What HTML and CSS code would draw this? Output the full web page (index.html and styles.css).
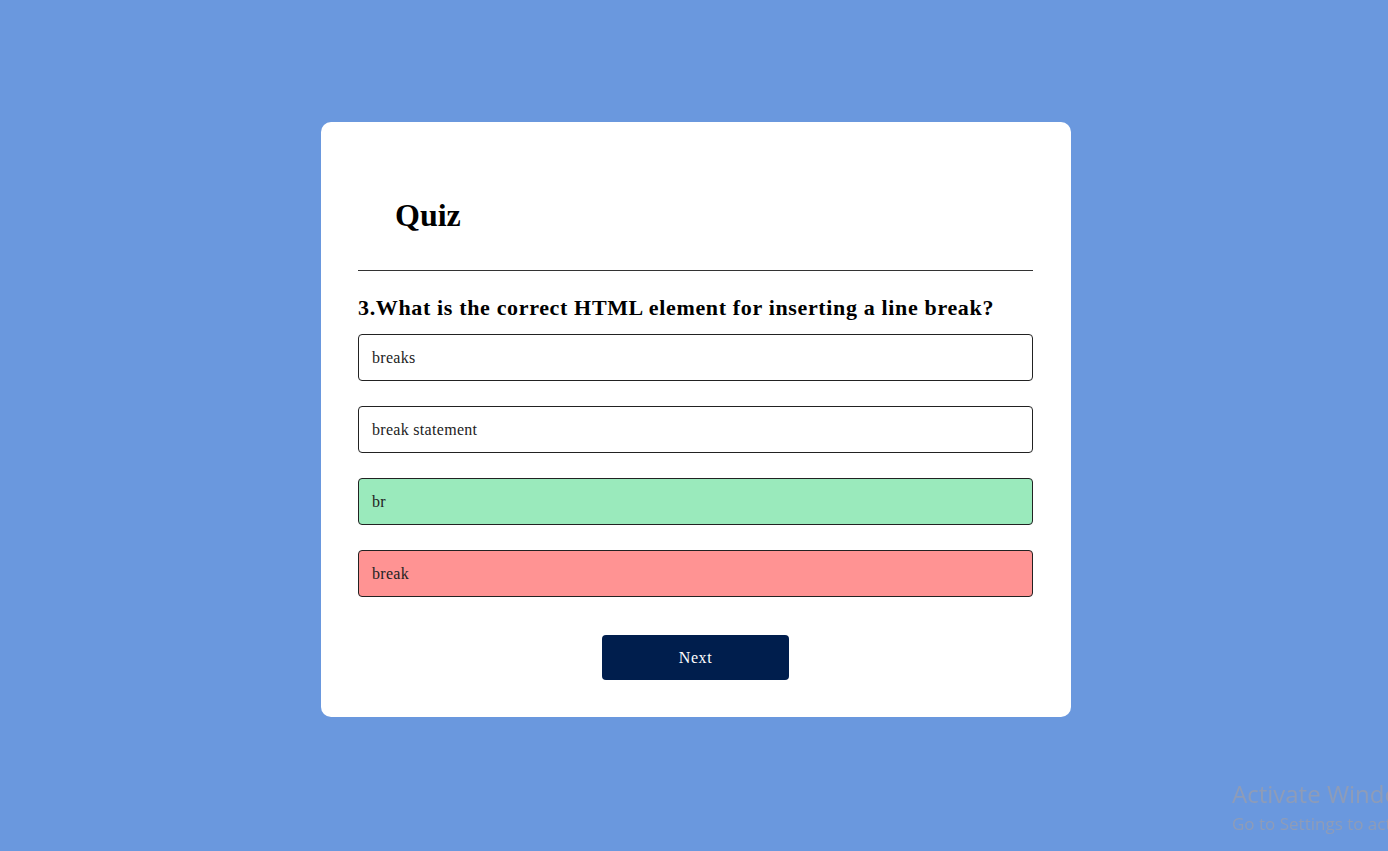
FILE: index.html
```html
<!DOCTYPE html>
<html>
<head>
<meta charset="utf-8">
<title>Quiz</title>
<link rel="stylesheet" href="styles.css">
</head>
<body>
<div class="app">
  <h1 class="title">Quiz</h1>
  <div class="quiz">
    <h2 class="question">3.What is the correct HTML element for inserting a line break?</h2>
    <div class="answers">
      <button class="btn">breaks</button>
      <button class="btn">break statement</button>
      <button class="btn correct">br</button>
      <button class="btn incorrect">break</button>
    </div>
    <button class="next">Next</button>
  </div>
</div>
<div class="watermark">
  <div class="wm-title">Activate Windows</div>
  <div class="wm-sub">Go to Settings to activate Windows.</div>
</div>
</body>
</html>
```

FILE: styles.css
```css
* { box-sizing: border-box; }
html, body {
  margin: 0;
  padding: 0;
}
body {
  background: #6a98de;
  font-family: "Liberation Serif", "Times New Roman", serif;
  height: 851px;
  overflow: hidden;
  padding-top: 122px;
  padding-left: 4px;
}
.app {
  width: 750px;
  margin: 0 auto;
  background: #fff;
  border-radius: 10px;
  padding: 75px 38px 37px 37px;
}
.title {
  margin: 0;
  padding: 0 0 37px 37px;
  font-size: 32px;
  font-weight: bold;
  color: #000;
  border-bottom: 1px solid #333;
  line-height: 36px;
}
.quiz {
  padding-top: 24px;
}
.question {
  margin: 0 0 14px;
  font-size: 22px;
  font-weight: bold;
  color: #000;
  line-height: 25px;
  letter-spacing: 0.65px;
}
.answers {
  display: flex;
  flex-direction: column;
  gap: 25px;
}
.btn {
  display: flex;
  align-items: center;
  width: 100%;
  height: 47px;
  padding: 0 13px;
  background: #fff;
  color: #222;
  border: 1px solid #222;
  border-radius: 4px;
  font-family: "Liberation Serif", "Times New Roman", serif;
  font-size: 16px;
  letter-spacing: 0.3px;
  text-align: left;
}
.btn.correct { background: #9aeabc; }
.btn.incorrect { background: #ff9393; }
.next {
  display: block;
  width: 187px;
  height: 45px;
  margin: 38px auto 0;
  background: #001e4d;
  color: #fff;
  border: none;
  border-radius: 4px;
  font-family: "Liberation Serif", "Times New Roman", serif;
  font-size: 16px;
  letter-spacing: 0.6px;
}
.watermark {
  position: fixed;
  left: 1232px;
  top: 778px;
  color: #8e9cb8;
  font-family: "Open Sans", "Noto Sans", sans-serif;
  white-space: nowrap;
}
.wm-title {
  font-size: 24px;
  line-height: 32px;
}
.wm-sub {
  font-size: 17px;
  line-height: 28px;
}
```
